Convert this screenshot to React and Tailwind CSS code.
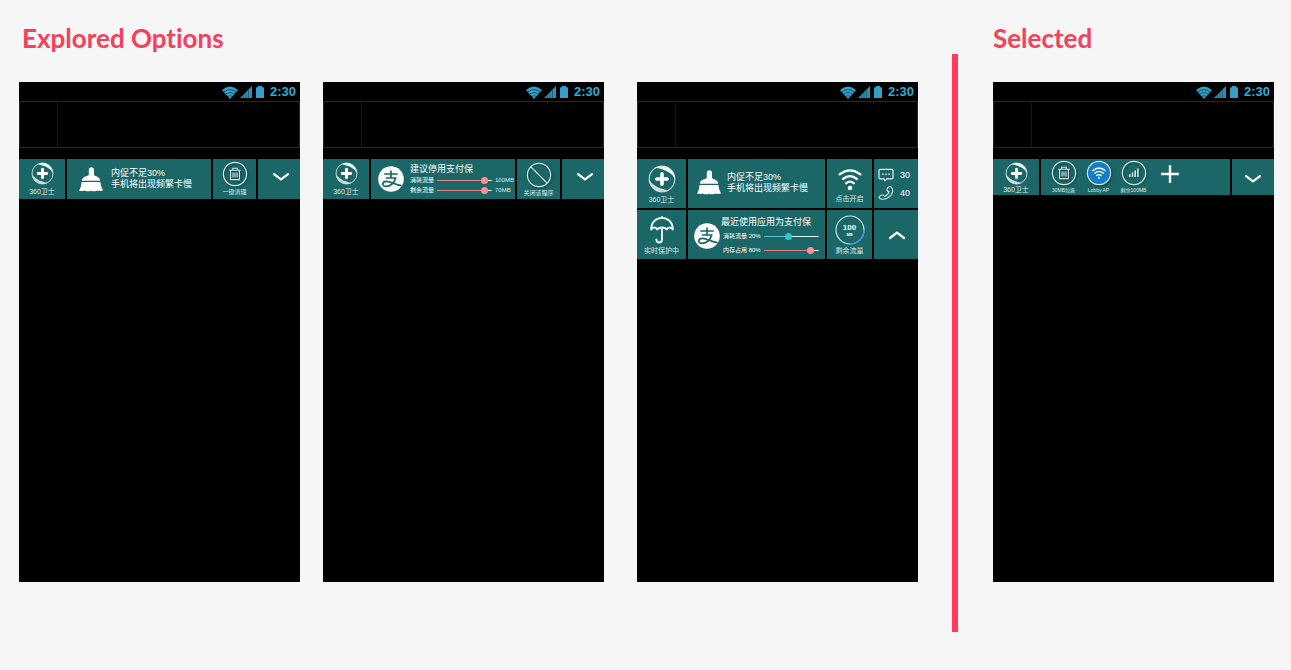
import React from "react";

const sans = "font-['Liberation_Sans','Noto_Sans_CJK_SC',sans-serif]";

function WifiStatus() {
  return (
    <svg viewBox="0 0 16 13" className="h-[13px] w-4" aria-hidden="true">
      <path d="M0 4 Q8 -3 16 4 L8 13Z" fill="#35a0c6" />
      <path d="M1.6 6.2 Q8 1 14.4 6.2 M3.4 8.4 Q8 4.8 12.6 8.4 M5.4 10.6 Q8 8.8 10.6 10.6" fill="none" stroke="#06202a" strokeWidth="0.6" />
    </svg>
  );
}

function SignalStatus() {
  return (
    <svg viewBox="0 0 12 12" className="h-3 w-3" aria-hidden="true">
      <path d="M0 12 L12 0 V12Z" fill="#2f8fb2" />
      <path d="M3.5 8.5 V12 M6 6 V12 M8.5 3.5 V12" stroke="#0b3c4e" strokeWidth="0.5" />
    </svg>
  );
}

function BatteryStatus() {
  return (
    <svg viewBox="0 0 8 12" className="h-3 w-2" aria-hidden="true">
      <path d="M2 0 H6 V1.3 H7.2 Q8 1.3 8 2.1 V12 H0 V2.1 Q0 1.3 .8 1.3 H2Z" fill="#359fc6" />
    </svg>
  );
}

function StatusBar() {
  return (
    <div className="flex h-[19px] items-center justify-end pr-1 pt-px text-[#35a9d6]">
      <WifiStatus />
      <span className="ml-0.5"><SignalStatus /></span>
      <span className="ml-1"><BatteryStatus /></span>
      <span className="ml-1.5 text-[13px] font-bold leading-[14px]">2:30</span>
    </div>
  );
}

function Phone({ children, className = "" }) {
  return (
    <article className={`min-h-[500px] min-w-0 flex-1 bg-black ${className}`}>
      <StatusBar />
      <div className="flex h-[47px] border border-[#2b2728]">
        <div className="w-[38px] border-r border-[#141414]" />
      </div>
      <div className="mt-[11px]">{children}</div>
    </article>
  );
}

function Shield({ className }) {
  return (
    <svg viewBox="0 0 28 28" className={className} aria-hidden="true">
      <circle cx="14" cy="14" r="12.8" fill="none" stroke="#c3d8d6" strokeWidth="1.2" />
      <path d="M8 2.7 A12.8 12.8 0 0 1 26.8 14 C24.5 8.2 18 4.6 8 2.7Z" fill="#f0f6f5" />
      <path d="M20 25.3 A12.8 12.8 0 0 1 1.2 14 C3.5 19.8 10 23.4 20 25.3Z" fill="#cfdfdd" />
      <path d="M14 8.8 V19.2 M8.8 14 H19.2" stroke="#fff" strokeWidth="3.6" strokeLinecap="round" />
    </svg>
  );
}

function Broom() {
  return (
    <svg viewBox="0 0 24 25" className="h-[25px] w-6 shrink-0" fill="#fff" aria-hidden="true">
      <path d="M9.8 3 Q9.8 .2 12.4 .2 Q15 .2 15 3 V7.6 C15 9.6 21 9 21.2 13.8 H2.8 C3 9 9.8 9.6 9.8 7.6Z" />
      <path d="M2.6 15 H21.4 Q21.6 19.5 24 23.6 Q21 24.6 18.4 23.4 Q15 25 12 23.8 Q9 25 5.8 23.4 Q3 24.6 .2 23.8 Q2.4 19.5 2.6 15Z" />
    </svg>
  );
}

function Alipay() {
  return (
    <svg viewBox="0 0 26 26" className="size-[26px] shrink-0" aria-hidden="true">
      <circle cx="13" cy="13" r="12.8" fill="#fff" />
      <path d="M6.2 8 H19.8 M13 4.4 V11.8 M7.8 12 H17.6 C16.6 16.8 12.2 20.4 8 20.4 C3.5 20.4 3.8 15.4 8.6 15.4 C13.2 15.4 17 18.8 23.6 19.6" fill="none" stroke="#1b6666" strokeWidth="1.7" />
    </svg>
  );
}

function Ring({ children, fill = "none" }) {
  return (
    <svg viewBox="0 0 26 26" className="size-[26px] drop-shadow-[1px_1px_1px_rgba(0,0,0,0.35)]" fill="none" aria-hidden="true">
      <circle cx="13" cy="13" r="11.6" fill={fill} stroke="#d0e5e3" strokeWidth="1.2" />
      {children}
    </svg>
  );
}

function TrashRing() {
  return (
    <Ring>
      <path d="M7.2 9.2 H18.8 M10.7 9.2 V7.3 H15.3 V9.2 M8.6 9.2 V18.6 H17.4 V9.2 M11 11.4 V16.6 M13 11.4 V16.6 M15 11.4 V16.6" stroke="#d0e5e3" strokeWidth="1.1" />
    </Ring>
  );
}

function BlockRing() {
  return (
    <Ring>
      <path d="M5 5 L21 21" stroke="#d0e5e3" strokeWidth="1.2" />
    </Ring>
  );
}

function WifiRing() {
  return (
    <Ring fill="#127ec3">
      <path d="M6.7 10.7 Q13 5.3 19.3 10.7 M8.7 13.2 Q13 9.6 17.3 13.2 M10.7 15.6 Q13 13.8 15.3 15.6" stroke="#fff" strokeWidth="1.3" strokeLinecap="round" />
      <circle cx="13" cy="17.8" r="1.1" fill="#fff" />
    </Ring>
  );
}

function SignalRing() {
  return (
    <Ring>
      <path d="M8.8 17 V14.2 M11.5 17 V12.4 M14.2 17 V10.6 M16.9 17 V8.5" stroke="#e6f2f1" strokeWidth="1.5" />
    </Ring>
  );
}

function Wifi() {
  return (
    <svg viewBox="0 0 24 22" className="h-[22px] w-6" fill="none" aria-hidden="true">
      <path d="M1.6 5.4 Q12 -2.6 22.4 5.4 M5 10 Q12 4.2 19 10 M8.3 14.2 Q12 11 15.7 14.2" stroke="#fff" strokeWidth="2.3" strokeLinecap="round" />
      <circle cx="12" cy="19" r="2.3" fill="#fff" />
    </svg>
  );
}

function Umbrella() {
  return (
    <svg viewBox="0 0 24 28" className="h-7 w-6" fill="none" stroke="#eef7f6" strokeWidth="1.9" strokeLinecap="round" strokeLinejoin="round" aria-hidden="true">
      <path d="M1.2 13.5 C1.2 -2 22.8 -2 22.8 13.5 C21.3 10.8 18 10.8 16.8 13.5 C15.3 10.8 8.7 10.8 7.2 13.5 C6 10.8 2.7 10.8 1.2 13.5Z M12 1 V2 M12 12 V23.2 C12 27.6 6.4 27.6 6.4 23.4" />
    </svg>
  );
}

function Message() {
  return (
    <svg viewBox="0 0 16 14" className="h-3.5 w-4" fill="none" stroke="#e3f1f0" strokeWidth="1.2" aria-hidden="true">
      <path d="M2.2 1.3 H13.8 Q15 1.3 15 2.5 V9.7 Q15 10.9 13.8 10.9 H8.8 L7 12.8 L5.8 10.9 H2.2 Q1 10.9 1 9.7 V2.5 Q1 1.3 2.2 1.3Z" />
      <path d="M4.2 6.2 H5.6 M7.3 6.2 H8.7 M10.4 6.2 H11.8" strokeWidth="1.4" />
    </svg>
  );
}

function Handset() {
  return (
    <svg viewBox="0 0 16 16" className="size-4" fill="none" stroke="#d5e8e6" strokeWidth="1.1" strokeLinejoin="round" aria-hidden="true">
      <path d="M9.8 2.6 Q11.4 .8 13 1.8 Q16.3 5.5 13.2 9.8 Q9.4 14.5 3.8 14.2 Q1.4 13.7 1 12 Q2.8 9.8 4.6 10 Q5.8 10 6.6 11.4 Q10.2 10 11.2 6.7 Q9.4 6.4 9 5 Q9.2 3.3 9.8 2.6Z" />
    </svg>
  );
}

function Chevron({ up }) {
  return (
    <svg viewBox="0 0 18 10" className="h-2.5 w-[18px]" fill="none" stroke="#fff" strokeWidth="2.3" strokeLinecap="round" aria-hidden="true">
      <path d={up ? "M2 8 L9 2.6 L16 8" : "M2 2.2 L9 7.4 L16 2.2"} />
    </svg>
  );
}

function Tile({ children, className = "" }) {
  return (
    <button type="button" className={`flex min-w-0 flex-col items-center bg-[#1b6666] text-white ${className}`}>
      {children}
    </button>
  );
}

function Panel({ children, className = "" }) {
  return <div className={`flex min-w-0 bg-[#1b6666] text-white ${className}`}>{children}</div>;
}

function Caption({ children, small }) {
  return (
    <span className={`whitespace-nowrap leading-[8px] text-[#dcebea] ${small ? "text-[6px]" : "text-[7px]"}`}>{children}</span>
  );
}

function Toggle({ up, className = "" }) {
  return (
    <button type="button" aria-label={up ? "收起" : "展开"} className={`flex items-center justify-center bg-[#1b6666] ${className}`}>
      <Chevron up={up} />
    </button>
  );
}

function MemoryText() {
  return (
    <p className="whitespace-nowrap text-[9px] leading-[11px]">
      内促不足30%
      <br />
      手机将出现频繁卡慢
    </p>
  );
}

const tones = {
  pink: { fill: "#e27f80", thumb: "[&::-webkit-slider-thumb]:bg-[#ff8f90]" },
  cyan: { fill: "#55b8d0", thumb: "[&::-webkit-slider-thumb]:bg-[#35c5c8]" },
};

function Slider({ id, value, tone }) {
  return (
    <input
      id={id}
      type="range"
      defaultValue={value}
      style={{ background: `linear-gradient(to right, ${tones[tone].fill} ${value}%, #e8f3f2 ${value}%) center / 100% 1px no-repeat` }}
      className={`h-[7px] w-[55px] min-w-0 appearance-none [&::-webkit-slider-thumb]:size-[7px] [&::-webkit-slider-thumb]:appearance-none [&::-webkit-slider-thumb]:rounded-full ${tones[tone].thumb}`}
    />
  );
}

function PhoneOne() {
  return (
    <Phone>
      <div className="grid h-10 grid-cols-[46px_1fr_43px_42px] gap-0.5">
        <Tile className="gap-[3px] pt-[3px]">
          <Shield className="size-[23px]" />
          <Caption>360卫士</Caption>
        </Tile>
        <Panel className="items-center gap-2 pl-3">
          <Broom />
          <MemoryText />
        </Panel>
        <Tile className="gap-px pt-0.5">
          <TrashRing />
          <Caption small>一键清理</Caption>
        </Tile>
        <Toggle className="pb-1 pl-1" />
      </div>
    </Phone>
  );
}

function PhoneTwo() {
  return (
    <Phone>
      <div className="grid h-10 grid-cols-[46px_1fr_43px_42px] gap-0.5">
        <Tile className="gap-[3px] pt-[3px]">
          <Shield className="size-[23px]" />
          <Caption>360卫士</Caption>
        </Tile>
        <Panel className="items-center gap-1.5 pl-[7px]">
          <Alipay />
          <div className="min-w-0 flex-1 pb-px">
            <p className="whitespace-nowrap text-[9px] leading-[12px]">建议停用支付保</p>
            {[["used", "消耗流量", "100MB"], ["left", "剩余流量", "70MB"]].map(([id, label, amount]) => (
              <div key={id} className="mt-px flex h-[9px] items-center gap-[3px] whitespace-nowrap text-[6px] leading-[8px]">
                <label htmlFor={`flow-${id}`}>{label}</label>
                <Slider id={`flow-${id}`} value={92} tone="pink" />
                <span className="w-[18px] shrink-0 text-[#dcebea]">{amount}</span>
              </div>
            ))}
          </div>
        </Panel>
        <Tile className="gap-px pt-[3px]">
          <BlockRing />
          <Caption small>关闭该程序</Caption>
        </Tile>
        <Toggle className="pb-1 pl-1" />
      </div>
    </Phone>
  );
}

function PhoneThree() {
  return (
    <Phone className="ml-2.5">
      <div className="grid auto-rows-[49px] grid-cols-[49px_1fr_45px_44px] gap-0.5">
        <Tile className="gap-[3px] pt-1.5">
          <Shield className="size-7" />
          <Caption>360卫士</Caption>
        </Tile>
        <Panel className="items-center gap-1.5 pb-0.5 pl-[9px]">
          <Broom />
          <MemoryText />
        </Panel>
        <Tile className="gap-1 pt-2.5">
          <Wifi />
          <Caption>点击开启</Caption>
        </Tile>
        <Panel className="flex-col gap-0.5 pl-1 pt-2 text-[9px] leading-[16px]">
          <span className="flex items-center gap-1.5"><Message />30</span>
          <span className="flex items-center gap-1.5"><Handset />40</span>
        </Panel>

        <Tile className="gap-[3px] pt-1.5">
          <Umbrella />
          <Caption>实时保护中</Caption>
        </Tile>
        <Panel className="gap-px pl-1.5 pt-[5px]">
          <div className="pt-2"><Alipay /></div>
          <div className="min-w-0">
            <p className="whitespace-nowrap text-[9px] leading-[14px]">最近使用应用为支付保</p>
            {[["data", "消耗流量 20%", 45, "cyan"], ["memory", "内存占用 80%", 90, "pink"]].map(([id, label, value, tone]) => (
              <div key={id} className="flex h-[14px] items-center gap-[3px] whitespace-nowrap pl-0.5 text-[6px] leading-[8px]">
                <label htmlFor={`use-${id}`}>{label}</label>
                <Slider id={`use-${id}`} value={value} tone={tone} />
              </div>
            ))}
          </div>
        </Panel>
        <Tile className="gap-0.5 pt-[5px]">
          <span className="grid size-[30px] place-content-center">
            <svg viewBox="0 0 30 30" className="col-start-1 row-start-1 size-[30px]" fill="none" aria-hidden="true">
              <circle cx="15" cy="15" r="14" stroke="#cfe4e2" strokeWidth="1.2" />
              <path d="M29 15 A14 14 0 0 1 15 29" stroke="#3f8fd0" strokeWidth="1.4" />
            </svg>
            <span className="col-start-1 row-start-1 flex flex-col items-center justify-center">
              <b className="text-[8px] leading-[8px]">100</b>
              <b className="text-[4px] leading-[5px]">MB</b>
            </span>
          </span>
          <Caption>剩余流量</Caption>
        </Tile>
        <Toggle up className="pl-0.5" />
      </div>
    </Phone>
  );
}

function Shortcut({ icon, children }) {
  return (
    <button type="button" className="flex w-[35px] flex-col items-center gap-px whitespace-nowrap text-[5px] leading-[6px] text-[#dcebea]">
      {icon}
      {children}
    </button>
  );
}

function PhoneSelected() {
  return (
    <Phone>
      <div className="grid h-9 grid-cols-[46px_1fr_42px] gap-0.5">
        <Tile className="gap-px pt-[3px]">
          <Shield className="size-[23px]" />
          <Caption>360卫士</Caption>
        </Tile>
        <Panel className="items-start pl-[5px] pt-px">
          <Shortcut icon={<TrashRing />}>30MB垃圾</Shortcut>
          <Shortcut icon={<WifiRing />}>Lobby AP</Shortcut>
          <Shortcut icon={<SignalRing />}>剩余100MB</Shortcut>
          <button type="button" aria-label="添加" className="flex h-7 w-[37px] items-center justify-center">
            <svg viewBox="0 0 18 18" className="size-[18px]" stroke="#fff" strokeWidth="2.4" aria-hidden="true">
              <path d="M9 0 V18 M0 9 H18" />
            </svg>
          </button>
        </Panel>
        <Toggle className="pt-1" />
      </div>
    </Phone>
  );
}

function Heading({ children, className = "" }) {
  return (
    <h2 className={`font-['Lato',sans-serif] text-[26px] font-bold leading-[30px] text-[#f6405b] [font-variant-ligatures:none] ${className}`}>
      {children}
    </h2>
  );
}

export default function App() {
  return (
    <main className={`min-h-screen bg-[#f6f6f6] pb-[38px] pl-[19px] pr-[17px] pt-[23px] ${sans}`}>
      <div className="grid grid-cols-[899fr_7px_281fr] gap-x-[34px]">
        <section className="min-w-0">
          <Heading className="pl-[3px]">Explored Options</Heading>
          <div className="mt-[29px] flex gap-[23px]">
            <PhoneOne />
            <PhoneTwo />
            <PhoneThree />
          </div>
        </section>
        <div className="mt-[31px] h-[578px] w-1.5 bg-[#ff3b57]" />
        <section className="min-w-0">
          <Heading>Selected</Heading>
          <div className="mt-[29px] flex">
            <PhoneSelected />
          </div>
        </section>
      </div>
    </main>
  );
}
